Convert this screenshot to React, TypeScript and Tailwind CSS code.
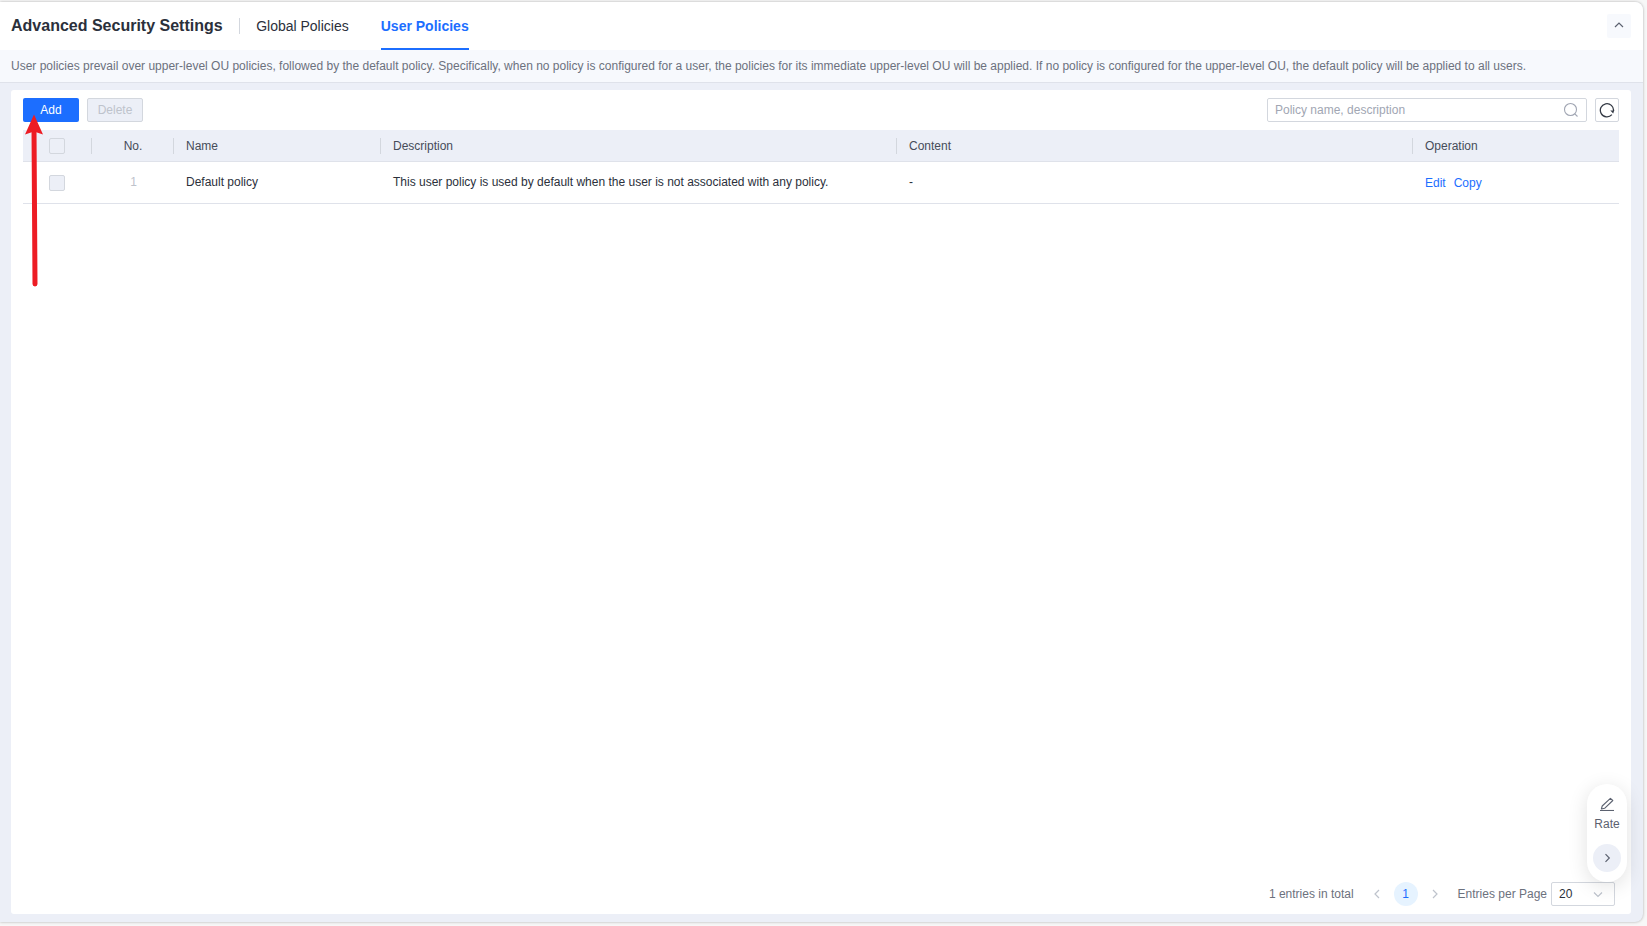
import { useState } from 'react'

type Tab = 'global' | 'user'

interface Policy {
  id: number
  name: string
  description: string
  content: string
}

const tabs: { key: Tab; label: string }[] = [
  { key: 'global', label: 'Global Policies' },
  { key: 'user', label: 'User Policies' },
]

const policies: Policy[] = [
  {
    id: 1,
    name: 'Default policy',
    description: 'This user policy is used by default when the user is not associated with any policy.',
    content: '-',
  },
]

const columns = 'grid grid-cols-[69px_81px_207px_516px_516px_207px]'

function Chevron({ d, className }: { d: string; className: string }) {
  return (
    <svg viewBox="0 0 10 10" fill="none" stroke="currentColor" strokeWidth="1.2" className={className}>
      <path d={d} />
    </svg>
  )
}

function HeaderCell({ label }: { label: string }) {
  return (
    <div className="flex items-center">
      <span className="h-4 w-px bg-[#d3d7de]" />
      <span className="pl-3">{label}</span>
    </div>
  )
}

function Toolbar() {
  const [search, setSearch] = useState('')

  return (
    <div className="flex h-6 items-center gap-2">
      <button className="h-6 w-14 rounded-xs bg-[#1c6eff] text-white">Add</button>
      <button
        disabled
        className="h-6 w-14 rounded-xs border border-[#d3d7de] bg-[#eceff7] text-[#bec3cc]"
      >
        Delete
      </button>
      <div className="ml-auto flex h-6 w-80 items-center rounded-xs border border-[#d3d7de] px-[7px]">
        <input
          value={search}
          onChange={(e) => setSearch(e.target.value)}
          placeholder="Policy name, description"
          className="min-w-0 flex-1 outline-none placeholder:text-[#a1a6b3]"
        />
        <svg viewBox="0 0 16 16" fill="none" stroke="#a1a6b3" strokeWidth="1.1" className="size-4">
          <circle cx="7.5" cy="7.5" r="6" />
          <path d="M11.8 11.8 14.5 14.5" />
        </svg>
      </div>
      <button className="flex size-6 items-center justify-center rounded-xs border border-[#d3d7de]">
        <svg viewBox="0 0 16 16" className="size-4 shrink-0">
          <path d="M12.9 12.6A6.6 6.6 0 1 1 14.5 9" fill="none" stroke="#343a45" strokeWidth="1.3" />
          <path d="M11.3 8.6H15.2L14.2 11.6Z" fill="#343a45" />
        </svg>
      </button>
    </div>
  )
}

function PolicyTable() {
  return (
    <div className="mt-2">
      <div className={`${columns} h-8 border-b border-[#dfe2ea] bg-[#eceff7] text-[#464c59]`}>
        <div className="flex items-center pl-[26px]">
          <span className="size-4 rounded-xs border border-[#d3d7de]" />
        </div>
        <div className="flex items-center">
          <span className="-ml-px h-4 w-px bg-[#d3d7de]" />
          <span className="flex-1 pl-px text-center">No.</span>
        </div>
        <HeaderCell label="Name" />
        <HeaderCell label="Description" />
        <HeaderCell label="Content" />
        <HeaderCell label="Operation" />
      </div>
      {policies.map((p) => (
        <div key={p.id} className={`${columns} h-[42px] items-center border-b border-[#dfe2ea] text-[#2b303b]`}>
          <div className="pt-px pl-[26px]">
            <span className="block size-4 rounded-xs border border-[#d3d7de] bg-[#eceff7]" />
          </div>
          <span className="pb-0.5 pl-0.5 text-center text-[#bec3cc]">{p.id}</span>
          <span className="pb-0.5 pl-[13px]">{p.name}</span>
          <span className="pb-0.5 pl-[13px]">{p.description}</span>
          <span className="pb-0.5 pl-[13px]">{p.content}</span>
          <div className="flex gap-2 pl-[13px] text-[#1c6eff]">
            <button>Edit</button>
            <button>Copy</button>
          </div>
        </div>
      ))}
    </div>
  )
}

function Pagination() {
  return (
    <div className="mt-auto flex h-6 items-center justify-end pr-1 text-[#6c717d]">
      <span>{policies.length} entries in total</span>
      <Chevron d="M7 1 3 5l4 4" className="ml-[18px] size-2.5 text-[#bec3cc]" />
      <span className="ml-3 flex size-6 items-center justify-center rounded-full bg-[#e6f3ff] text-[#1c6eff]">
        1
      </span>
      <Chevron d="M3 1l4 4-4 4" className="ml-3 size-2.5 text-[#bec3cc]" />
      <span className="ml-[18px]">Entries per Page</span>
      <button className="ml-1 flex h-6 w-16 items-center justify-between rounded-xs border border-[#d3d7de] pr-[11px] pl-[7px] text-[#2b303b]">
        20
        <Chevron d="M1 3.5l4 4 4-4" className="size-2.5 text-[#bec3cc]" />
      </button>
    </div>
  )
}

function RateWidget() {
  return (
    <div className="absolute top-[784px] left-[1587px] flex h-[98px] w-10 flex-col items-center rounded-[20px] bg-white text-[#5c6270] shadow-[0_4px_20px_rgba(0,0,0,0.12)]">
      <svg viewBox="0 0 14 14" fill="none" stroke="currentColor" strokeWidth="1.1" className="mt-[13px] size-3.5">
        <path d="M0 13.5H14" />
        <path d="M1.4 12 2.2 9 10.4 1.3 12.8 3.5 4.6 11.3Z" strokeLinejoin="round" />
      </svg>
      <span className="mt-1 leading-[18px]">Rate</span>
      <button className="mt-[11px] flex size-7 items-center justify-center rounded-full bg-[#eceff7]">
        <Chevron d="M3.5 1.2l3.8 3.8-3.8 3.8" className="size-2.5" />
      </button>
    </div>
  )
}

export default function App() {
  const [activeTab, setActiveTab] = useState<Tab>('user')

  return (
    <div className="relative h-[926px] w-[1647px] overflow-hidden bg-[#f7f7f7] pt-0.5 font-['Liberation_Sans',Arial,sans-serif] text-xs">
      <div className="flex h-[920px] w-[1643px] flex-col overflow-hidden rounded-r-lg bg-[#eceff7] shadow-[0_0_3px_rgba(0,0,0,0.3)]">
        <header className="flex h-12 shrink-0 items-center bg-white pr-3 pl-[11px]">
          <h1 className="text-base font-bold text-[#2b303b]">Advanced Security Settings</h1>
          <span className="ml-4 h-4 w-px bg-[#d3d7de]" />
          <nav className="ml-[16.5px] flex h-full gap-8">
            {tabs.map(({ key, label }) => (
              <button
                key={key}
                onClick={() => setActiveTab(key)}
                className={`border-b-2 pt-0.5 text-sm ${
                  activeTab === key
                    ? 'border-[#1c6eff] font-bold text-[#1c6eff]'
                    : 'border-transparent text-[#2b303b]'
                }`}
              >
                {label}
              </button>
            ))}
          </nav>
          <button className="ml-auto flex size-6 items-center justify-center rounded-xs bg-[#f7f9fd] pb-0.5 text-[#5c6270]">
            <Chevron d="M1 7l4-4 4 4" className="size-2.5" />
          </button>
        </header>

        <div className="flex h-[33px] shrink-0 items-center border-b border-[#dfe2ea] bg-[#f7f9fd] pl-[11px] text-[#6c717d]">
          User policies prevail over upper-level OU policies, followed by the default policy. Specifically,
          when no policy is configured for a user, the policies for its immediate upper-level OU will be
          applied. If no policy is configured for the upper-level OU, the default policy will be applied to
          all users.
        </div>

        <main className="mt-[7px] mr-3 mb-2 ml-[11px] flex flex-1 flex-col rounded-[3px] bg-white px-3 py-2">
          <Toolbar />
          <PolicyTable />
          <Pagination />
        </main>
      </div>

      <RateWidget />

      {/* Callout arrow pointing at the Add button */}
      <svg viewBox="0 0 20 174" className="absolute top-[114px] left-6 h-[174px] w-5">
        <path d="M10 15 11 170" stroke="#ed1c24" strokeWidth="5" strokeLinecap="round" />
        <path d="M10 .5 19 20.5 10 17.5 1 20.5Z" fill="#ed1c24" />
      </svg>
    </div>
  )
}
